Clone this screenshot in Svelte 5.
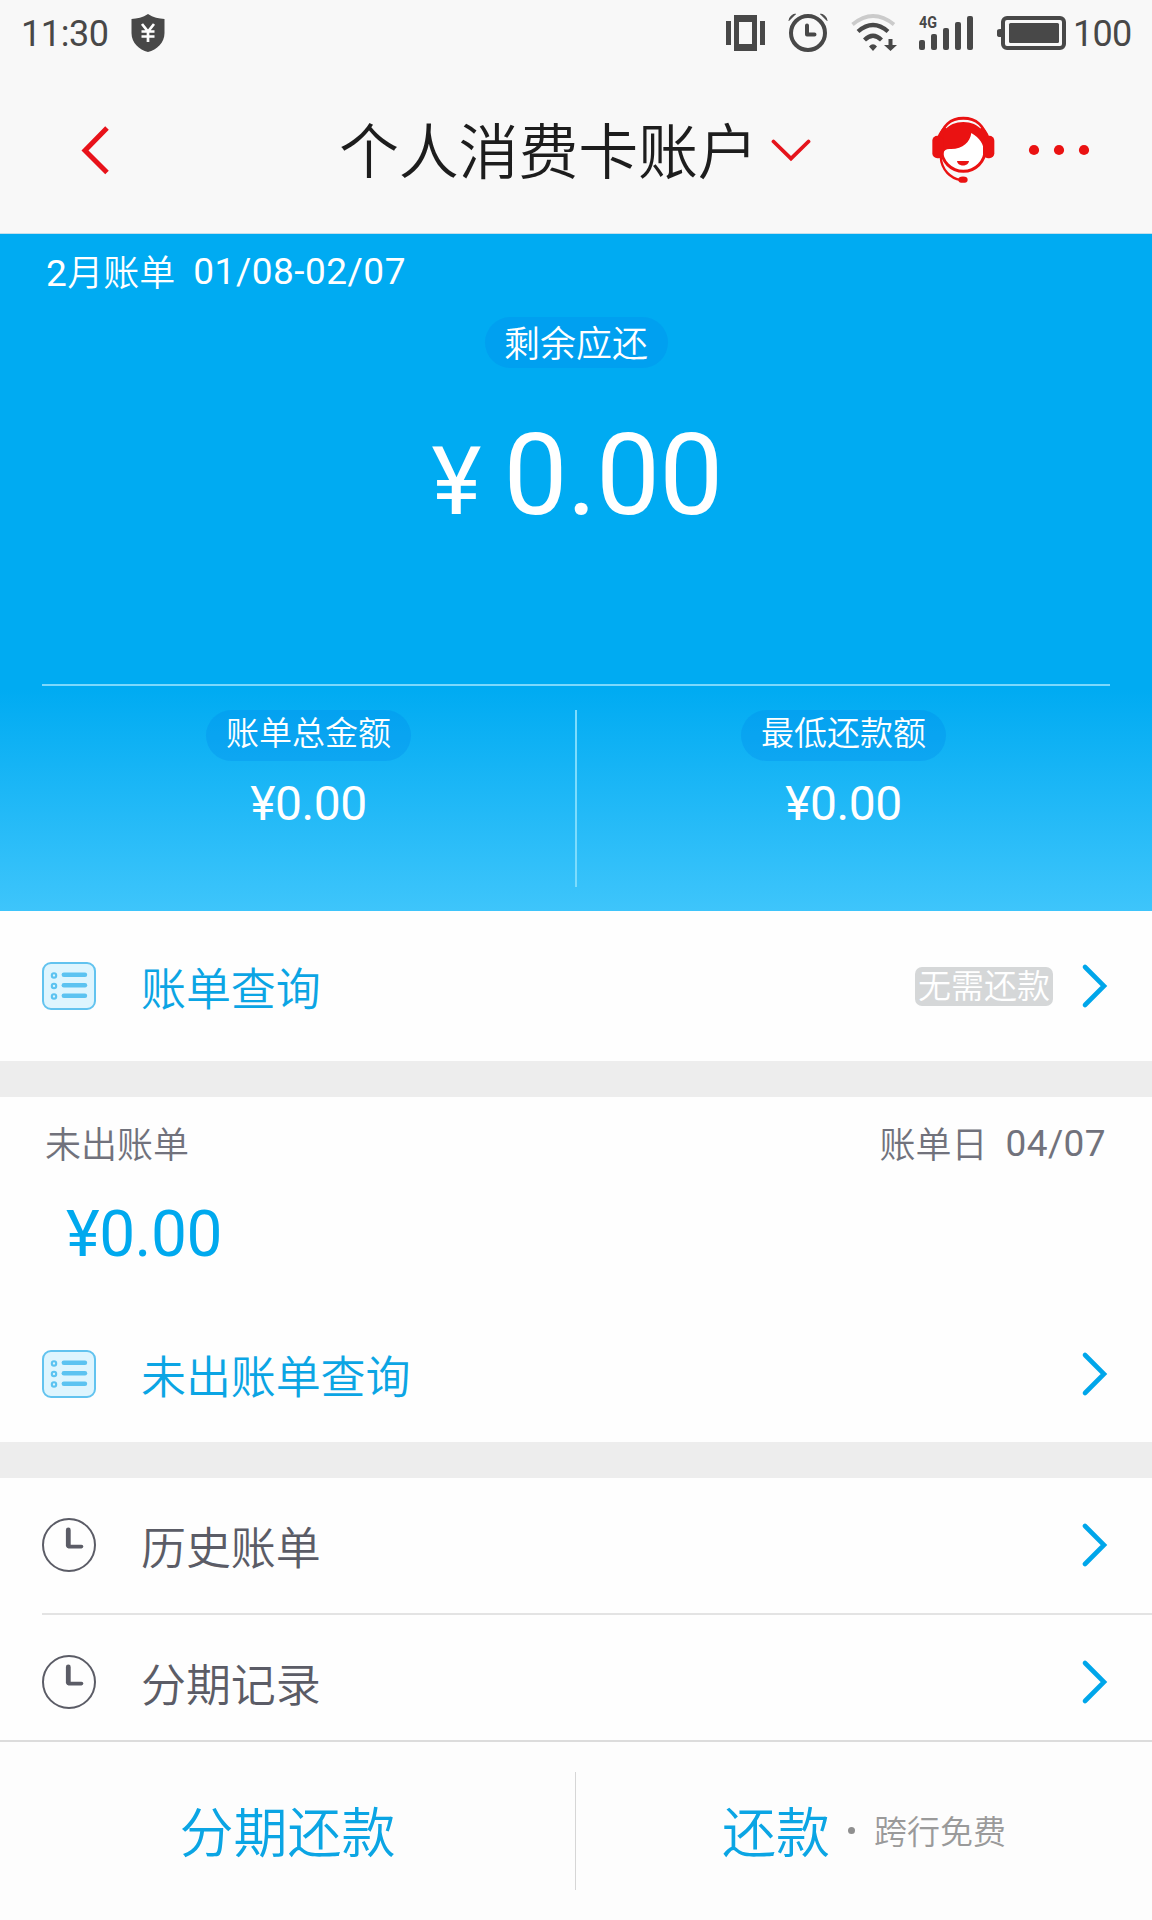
<script lang="ts">
	const bill = { month: '2', range: '01/08-02/07', remaining: '0.00' };

	const summary = [
		{ label: '账单总金额', amount: '0.00' },
		{ label: '最低还款额', amount: '0.00' },
	];

	const records = ['历史账单', '分期记录'];
</script>

{#snippet chevron()}
	<svg class="chevron" width="28" height="46" viewBox="0 0 28 46">
		<path d="M4 4 L23 23 L4 42" fill="none" stroke="#00a6ea" stroke-width="4.6" stroke-linecap="round" />
	</svg>
{/snippet}

{#snippet listIcon()}
	<svg class="row-icon" width="54" height="48" viewBox="0 0 54 48">
		<rect x="1" y="1" width="52" height="46" rx="8" fill="#def5fe" stroke="#62c3ef" stroke-width="2" />
		{#each [13.5, 24, 34.5] as y}
			<circle cx="12" cy={y} r="2.2" fill="none" stroke="#5cc3f1" stroke-width="2.1" />
			<path d="M21.8 {y - 0.8} H43" stroke="#5cc3f1" stroke-width="4.4" stroke-linecap="round" />
		{/each}
	</svg>
{/snippet}

{#snippet clockIcon()}
	<svg class="row-icon" width="54" height="54" viewBox="0 0 54 54" fill="none" stroke="#5b5c66">
		<circle cx="27" cy="27" r="26" stroke-width="2" />
		<path d="M26.300 12 V27.500" stroke-width="4.800" stroke-linecap="round" />
		<path d="M26.500 28.600 H39.500" stroke-width="3.600" stroke-linecap="round" />
	</svg>
{/snippet}

<div class="screen">
	<div class="status">
		<span class="time">11:30</span>
		<svg class="shield" width="34" height="38" viewBox="0 0 34 38">
			<path d="M17 0 C22 3.500 28 4.700 33.500 5 V19 C33.500 29 26 35.500 17 38 C8 35.500 .5 29 .5 19 V5 C6 4.700 12 3.500 17 0 Z" fill="#484848" />
			<path d="M11 10 L17 17.500 L23 10 M17 17 V28 M10.500 17.500 H23.500 M10.500 22.500 H23.500" fill="none" stroke="#fff" stroke-width="2.700" />
		</svg>
		<!-- vibrate, alarm, wifi, signal, battery -->
		<svg class="indicators" width="346" height="40" viewBox="0 0 346 40" fill="none" stroke="#484848">
			<path d="M2.500 8 V32 M36.500 8 V32" stroke-width="5" />
			<path d="M8 2 H31 V38 H8 Z M13 9 V31 H26 V9 Z" fill="#484848" fill-rule="evenodd" stroke="none" />

			<circle cx="82" cy="20" r="17" stroke-width="4" />
			<path d="M81 12.500 V21.500 H88.500" stroke-width="4" stroke-linecap="round" stroke-linejoin="round" />
			<path d="M63 7.500 Q64 2 69.500 1 Z M101 7.500 Q100 2 94.500 1 Z" fill="#484848" stroke="#484848" stroke-width="1" />

			<path d="M126.500 11.500 Q147 -5.500 168 11.500" stroke="#cbcbcb" stroke-width="3.800" />
			<path d="M132 18.500 Q147 5.500 162 18.500" stroke-width="4.200" />
			<path d="M138.500 27 Q147 18.500 155.500 27" stroke-width="4.200" />
			<path d="M143 33.500 Q147 29 151 33.500 L147 38 Z M162.500 26 H166.500 V32 H171 L164.500 38 L158 32 H162.500 Z" fill="#484848" stroke="none" />

			<text x="193" y="15" class="net" textLength="18" lengthAdjust="spacingAndGlyphs">4G</text>
			<g fill="#484848" stroke="none">
				{#each [27, 21, 15, 9, 3] as y, i}
					<rect x={193 + i * 12} {y} width="6" height={37 - y} rx="2" />
				{/each}
			</g>

			<rect x="277" y="5" width="61" height="30" rx="4" stroke-width="4" />
			<rect x="283" y="10" width="50" height="20" rx="1.500" fill="#484848" stroke="none" />
			<path d="M275 16 H274 Q271 16 271 18 V22 Q271 24 274 24 H275 Z" fill="#484848" stroke="none" />
		</svg>
		<span class="percent">100</span>
	</div>

	<header class="nav">
		<svg class="back" width="30" height="52" viewBox="0 0 30 52">
			<path d="M28 4 L6 26.500 L28 48.500" fill="none" stroke="#e8121a" stroke-width="5" />
		</svg>
		<h1>个人消费卡账户</h1>
		<svg class="drop" width="40" height="24" viewBox="0 0 40 24">
			<path d="M2.500 3.500 L20 20.500 L37.500 3.500" fill="none" stroke="#e5141c" stroke-width="3.800" stroke-linecap="round" />
		</svg>
		<svg class="service" width="66" height="70" viewBox="0 0 198 210" fill="none" stroke="#ea1212">
			<path d="M30 74 C36 32 62 10 100 10 C138 10 164 32 170 74" stroke-width="9" />
			<circle cx="100" cy="103" r="66" fill="#fff" stroke-width="9" />
			<path d="M27 114 C20 56 54 21 100 21 C146 21 180 56 173 112 H163 C161 88 150 69 124 54 C120 82 98 104 58 102 C48 102 43 106 40 114 Z" fill="#ea1212" stroke="none" />
			<path d="M29 68 C33 56 40 47 48 40 M171 68 C167 56 160 47 152 40" stroke-width="14" />
			<rect x="7" y="62" width="34" height="68" rx="15" fill="#ea1212" stroke="none" />
			<rect x="159" y="62" width="34" height="68" rx="15" fill="#ea1212" stroke="none" />
			<path d="M32 126 C35 166 62 190 92 195" stroke-width="7" />
			<ellipse cx="99" cy="194" rx="14" ry="9.500" fill="#ea1212" stroke="none" />
			<path d="M81 138 H117 C115 156 83 156 81 138 Z" fill="#ea1212" stroke="none" />
		</svg>
		<svg class="more" width="62" height="12" viewBox="0 0 62 12" fill="#ea1212">
			<circle cx="6" cy="6" r="5.100" />
			<circle cx="31" cy="6" r="5.100" />
			<circle cx="56" cy="6" r="5.100" />
		</svg>
	</header>

	<section class="hero">
		<div class="period"><span><span class="num">{bill.month}</span>月账单</span><span class="num">{bill.range}</span></div>
		<div class="remaining"><span class="pill main">剩余应还</span></div>
		<div class="total num"><span class="yen">¥</span><span>{bill.remaining}</span></div>
		<div class="summary">
			{#each summary as item}
				<div class="cell">
					<span class="pill">{item.label}</span>
					<span class="amount num">¥{item.amount}</span>
				</div>
			{/each}
		</div>
	</section>

	<div class="row bill-row">
		{@render listIcon()}
		<span class="name">账单查询</span>
		<span class="tag">无需还款</span>
		{@render chevron()}
	</div>

	<div class="gap"></div>

	<section class="unbilled">
		<div class="unbilled-head">
			<span>未出账单</span>
			<span class="day">账单日</span>
			<span class="num">04/07</span>
		</div>
		<div class="unbilled-amount num">¥0.00</div>
		<div class="row">
			{@render listIcon()}
			<span class="name">未出账单查询</span>
			{@render chevron()}
		</div>
	</section>

	<div class="gap"></div>

	<div class="records">
		{#each records as record}
			<div class="row dark">
				{@render clockIcon()}
				<span class="name">{record}</span>
				{@render chevron()}
			</div>
		{/each}
	</div>

	<footer class="actions">
		<div class="action first">分期还款</div>
		<div class="action second">还款<span class="dot"></span><small>跨行免费</small></div>
	</footer>
</div>

<style>
	:global(body) {
		background: #fff;
	}

	.screen {
		width: 1152px;
		height: 1920px;
		overflow: hidden;
		display: flex;
		flex-direction: column;
		background: #fefefe;
		font-family: 'Noto Sans CJK SC', sans-serif;
		font-weight: 350;
		line-height: 1;
		white-space: nowrap;
	}

	svg {
		display: block;
		flex: none;
	}

	.num {
		font-family: Roboto, sans-serif;
		font-weight: 400;
	}

	.status {
		height: 66px;
		background: #f8f8f8;
		display: flex;
		align-items: center;
		box-sizing: border-box;
		padding-left: 21px;
		font: 400 36px/68px Roboto, sans-serif;
		color: #484848;
	}

	.time {
		width: 110px;
		letter-spacing: -0.4px;
	}

	.time,
	.percent {
		padding-top: 1px;
	}

	.indicators {
		margin-left: 561px;
	}

	.net {
		font: 700 16px Roboto, sans-serif;
		fill: #484848;
		stroke: none;
	}

	.percent {
		margin-left: 1px;
		letter-spacing: -0.7px;
	}

	.nav {
		height: 168px;
		box-sizing: border-box;
		background: #f8f8f8;
		border-bottom: 1px solid #c3dfec;
		display: flex;
		align-items: center;
		padding-left: 79px;
	}

	h1 {
		margin: 0 0 0 230px;
		width: 432px;
		padding-bottom: 4px;
		font-size: 60px;
		font-weight: 350;
		line-height: 86px;
		letter-spacing: -0.2px;
		color: #1d1d1d;
	}

	.service {
		margin-left: 119px;
	}

	.more {
		margin-left: 32px;
	}

	.hero {
		height: 677px;
		box-sizing: border-box;
		padding: 0 42px;
		color: #fff;
		background: linear-gradient(#00abf2 0, #00abf2 455px, #3ec5fb 100%);
	}

	.period {
		display: flex;
		gap: 18px;
		padding: 16px 0 0 4px;
		height: 67px;
		box-sizing: border-box;
		margin-bottom: 16px;
		font-size: 36px;
		line-height: 40px;
	}

	.period .num {
		font-size: 37px;
		line-height: 44px;
		letter-spacing: 0.5px;
	}

	.remaining {
		display: flex;
		justify-content: center;
	}

	.pill {
		box-sizing: border-box;
		height: 51px;
		width: 205px;
		border-radius: 26px;
		background: rgba(0, 135, 235, 0.3);
		text-align: center;
		font-size: 33px;
		line-height: 43px;
	}

	.pill.main {
		width: 183px;
		font-size: 36px;
		line-height: 48px;
	}

	.total {
		display: flex;
		justify-content: center;
		align-items: baseline;
		gap: 23px;
		height: 316px;
		padding: 51px 0 0 2px;
		box-sizing: border-box;
		font-size: 114px;
		line-height: 113px;
		letter-spacing: -0.8px;
	}

	.yen {
		font-size: 95px;
	}

	.summary {
		display: grid;
		grid-template-columns: 535px 1fr;
		border-top: 2px solid #7cd8fc;
		padding-top: 24px;
	}

	.cell {
		height: 177px;
		display: flex;
		flex-direction: column;
		align-items: center;
	}

	.cell:first-child {
		border-right: 2px solid #7cdcfd;
	}

	.amount {
		margin-top: 18px;
		font-size: 48px;
		line-height: 50px;
		letter-spacing: -0.5px;
	}

	.row {
		display: flex;
		align-items: center;
		padding: 0 43px 0 42px;
		color: #0ba5e4;
	}

	.name {
		margin-left: 45px;
		flex: 1;
		font-size: 45px;
		line-height: 59px;
		letter-spacing: -0.1px;
	}

	.tag {
		width: 138px;
		height: 39px;
		margin-right: 28px;
		border-radius: 7px;
		background: #d5d7d8;
		color: #fff;
		text-align: center;
		font-size: 33px;
		line-height: 35px;
	}

	.bill-row {
		height: 150px;
	}

	.gap {
		height: 36px;
		background: #ededed;
	}

	.unbilled {
		height: 345px;
	}

	.unbilled-head {
		display: flex;
		padding: 23px 46px 0 45px;
		font-size: 36px;
		line-height: 44px;
		color: #71727c;
	}

	.unbilled-head .num {
		font-size: 37px;
		line-height: 48px;
		letter-spacing: 0.4px;
	}

	.day {
		margin-left: auto;
		margin-right: 18px;
	}

	.unbilled-amount {
		margin-top: 27px;
		padding-left: 66px;
		font-size: 64px;
		line-height: 80px;
		letter-spacing: -0.5px;
		color: #00a9ee;
	}

	.unbilled .row {
		height: 198px;
	}

	.records {
		height: 262px;
	}

	.row.dark {
		height: 134px;
		color: #5b5c66;
	}

	.row.dark + .row.dark {
		margin-left: 42px;
		margin-top: 1px;
		padding-left: 0;
		border-top: 2px solid #e3e3e3;
	}

	.actions {
		height: 178px;
		border-top: 2px solid #dcdcdc;
		background: #fdfdfd;
		display: flex;
		align-items: center;
		color: #0ba5e4;
		font-size: 54px;
	}

	.action {
		height: 116px;
		padding-bottom: 2px;
		display: flex;
		align-items: center;
		justify-content: center;
	}

	.first {
		width: 575px;
		border-right: 1px solid #d6d6d6;
	}

	.second {
		flex: 1;
	}

	.dot {
		width: 7px;
		height: 7px;
		margin: 1px 19px 0 18px;
		border-radius: 50%;
		background: #8f8f8f;
	}

	small {
		font-size: 33px;
		color: #9a9a9a;
	}
</style>
